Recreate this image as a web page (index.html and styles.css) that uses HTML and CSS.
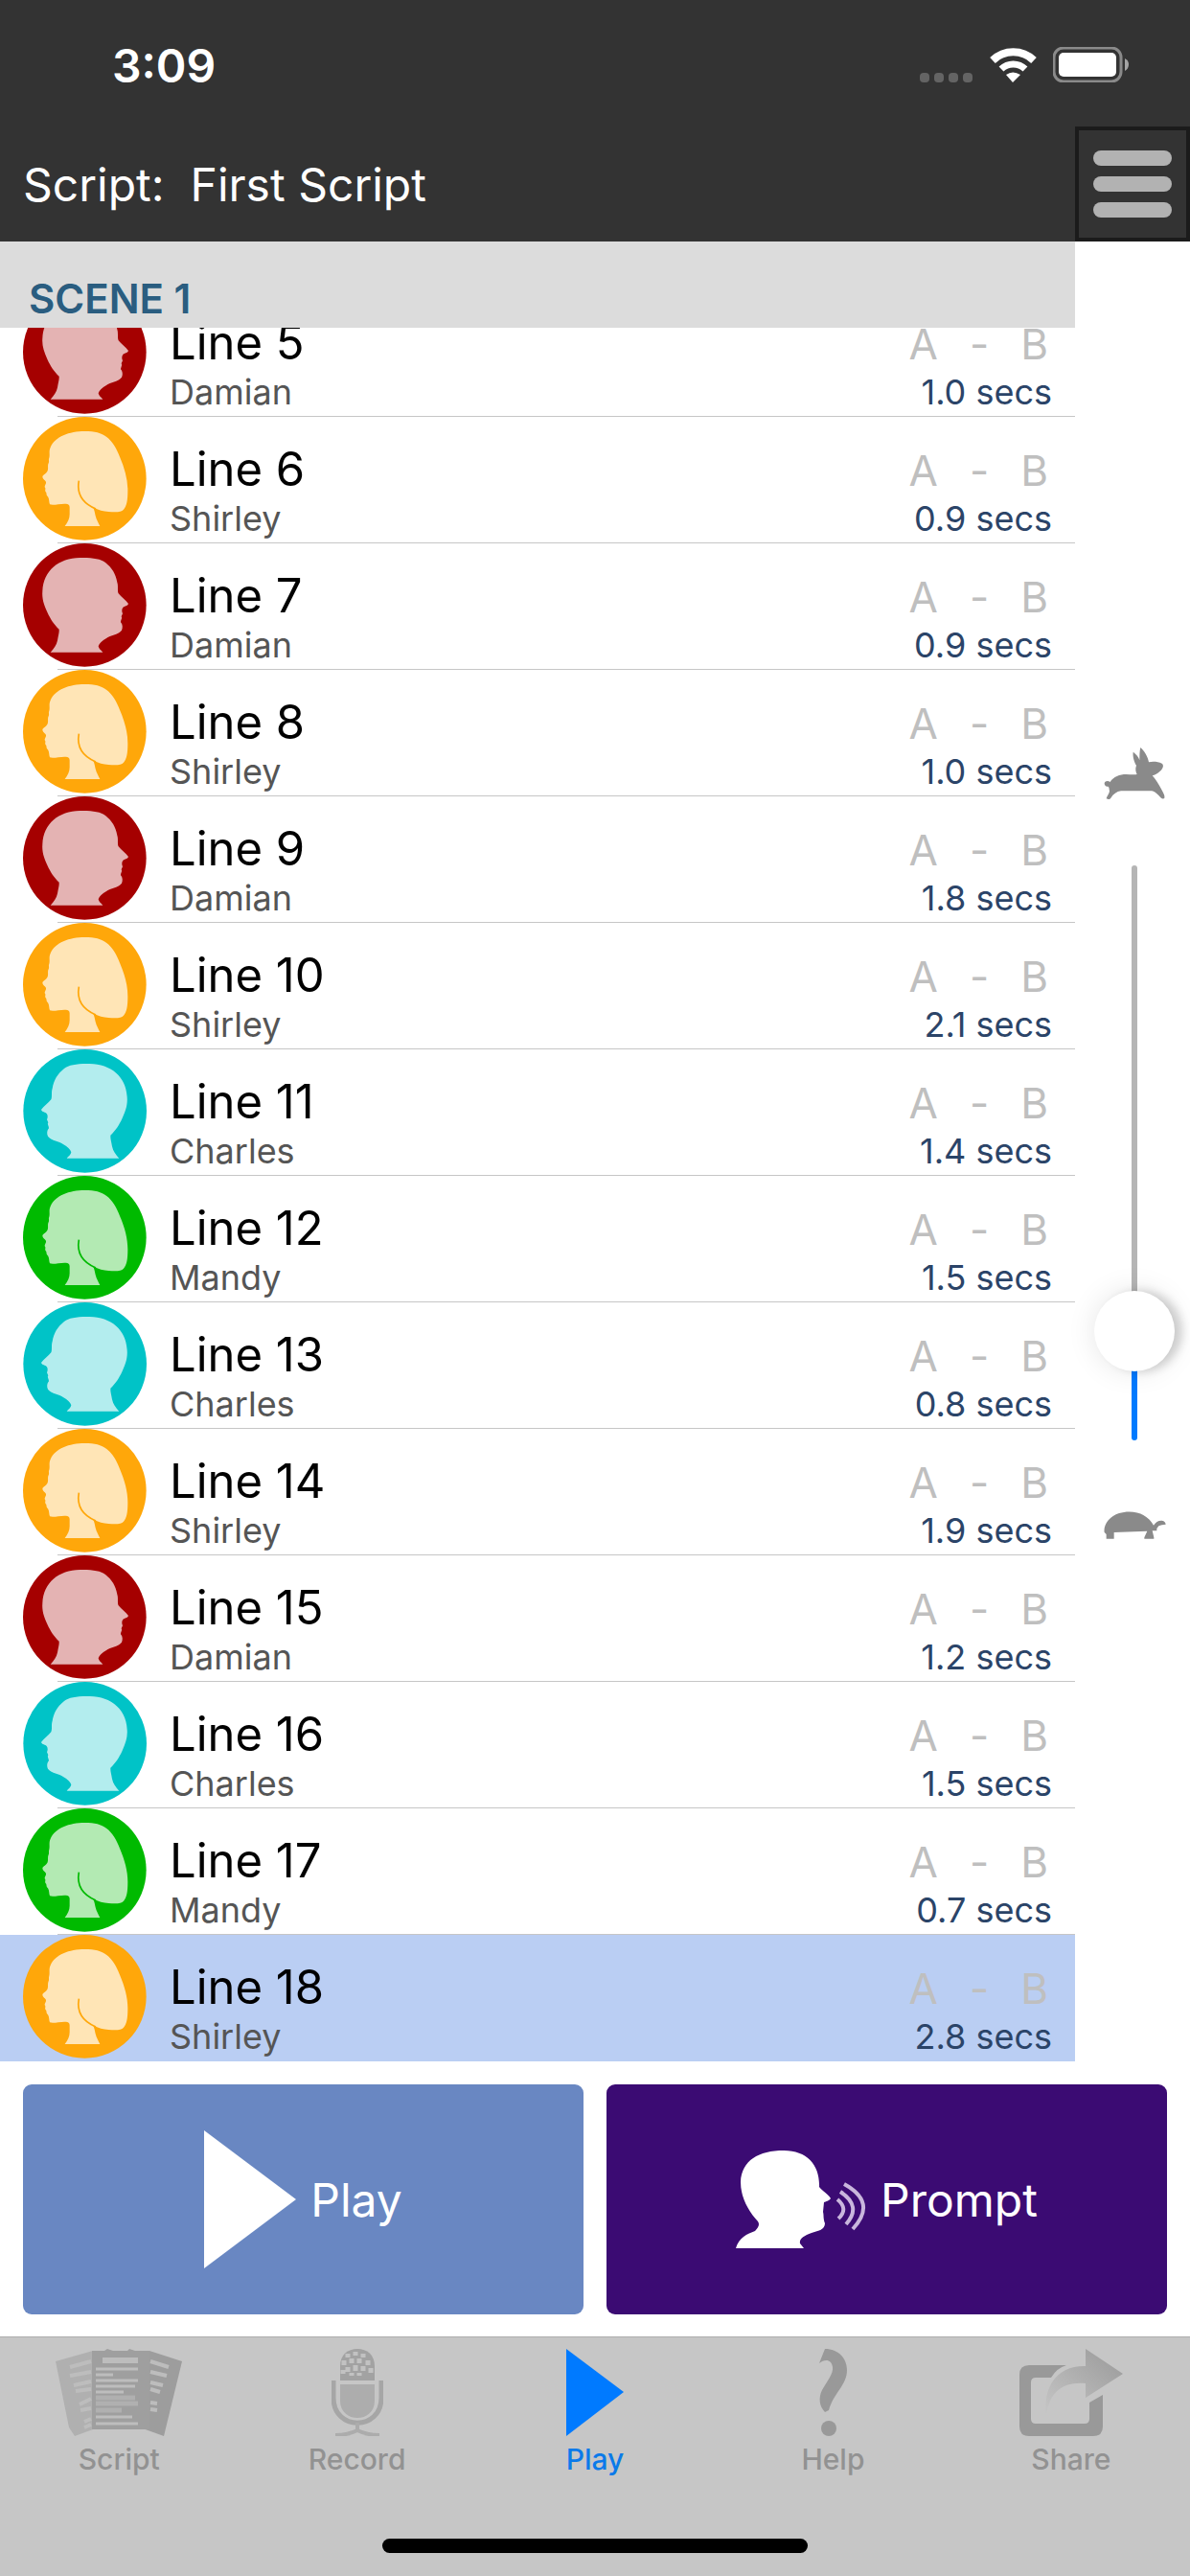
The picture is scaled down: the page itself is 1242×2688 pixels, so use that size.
FILE: index.html
```html
<!DOCTYPE html>
<html lang="en">

<head>
    <meta charset="UTF-8">
    <meta name="viewport" content="width=device-width, initial-scale=1.0">
    <title>First Script</title>
    <link rel="stylesheet" href="styles.css">
</head>

<body>

    <!-- Shared avatar shapes -->
    <svg class="sprite" aria-hidden="true">
        <symbol id="woman" viewBox="0 0 387 387">
            <circle cx="193" cy="193" r="193" fill="currentColor" />
            <path class="face" d="M86 95C100 62 145 45 193 45C225 45 245 50 262 63C280 77 293 99 303 125C318 160 328 195 328 230C328 262 325 278 315 290C308 299 290 298 268 297C252 296 236 291 220 284C224 294 225 300 227 310C230 322 236 332 241 342H131C140 330 146 318 146 305V283C146 275 142 273 134 272C115 271 96 278 84 274C81 267 83 258 78 250C71 244 76 240 71 235C67 229 73 225 68 220C67 215 73 210 72 205C72 199 61 196 61 187C63 181 73 178 77 169C80 160 76 153 80 145C83 140 79 135 82 128C85 118 80 108 86 95Z" />
            <path d="M175 200C167 245 190 272 228 288" fill="none" stroke="currentColor" stroke-width="5" />
        </symbol>
        <symbol id="man" viewBox="0 0 387 387">
            <circle cx="193" cy="193" r="193" fill="currentColor" />
            <path class="face" d="M178 45C215 44 243 48 258 60C279 77 290 95 295 122C299 133 295 148 299 157C306 167 323 178 330 189C328 197 316 196 313 201C309 206 309 213 312 220L308 229C312 234 306 240 306 247C312 253 313 264 309 272C296 287 275 286 260 298C248 305 239 313 236 322C237 330 245 335 250 341H86C97 330 105 318 108 304C110 290 114 279 113 269C96 252 86 237 76 215C65 191 59 172 61 149C64 85 112 46 178 45Z" />
        </symbol>
    </svg>

    <!-- Header -->
    <header>
        <div class="status-bar">
            <span class="clock">3:09</span>
            <div class="status-icons">
                <svg width="56" height="10" viewBox="0 0 56 10" fill="#646464">
                    <rect width="10" height="10" rx="4" />
                    <rect x="15" width="10" height="10" rx="4" />
                    <rect x="30" width="10" height="10" rx="4" />
                    <rect x="45" width="10" height="10" rx="4" />
                </svg>
                <svg width="49" height="36" viewBox="0 0 49 36" fill="none" stroke="#fff">
                    <path d="M3 13A31 31 0 0 1 46 13" stroke-width="8" />
                    <path d="M12 22A18 18 0 0 1 37 22" stroke-width="7" />
                    <path d="M24 36L17 28Q24 23 32 28Z" fill="#fff" stroke="none" />
                </svg>
                <svg width="79" height="37" viewBox="0 0 79 37">
                    <rect x="1" y="1" width="70" height="35" rx="10" fill="none" stroke="#8a8a8a" stroke-width="3" />
                    <rect x="6" y="6" width="60" height="25" rx="5" fill="#fff" />
                    <path d="M75 12Q79 14 79 18Q79 23 75 25Z" fill="#a5a5a5" />
                </svg>
            </div>
        </div>
        <div class="title-bar">
            <h1>Script:&nbsp; First Script</h1>
            <button class="menu-button" aria-label="Menu">
                <span class="menu-bar"></span>
                <span class="menu-bar"></span>
                <span class="menu-bar"></span>
            </button>
        </div>
    </header>

    <!-- Script lines and speed slider -->
    <main>
        <section class="scene">
            <h2>SCENE 1</h2>
            <ul class="lines">
                <li class="line">
                    <svg class="avatar damian"><use href="#man" /></svg>
                    <span class="line-title">Line 5</span>
                    <span class="range"><span>A</span><span>-</span><span>B</span></span>
                    <span class="name">Damian</span>
                    <span class="secs">1.0 secs</span>
                </li>
                <li class="line">
                    <svg class="avatar shirley"><use href="#woman" /></svg>
                    <span class="line-title">Line 6</span>
                    <span class="range"><span>A</span><span>-</span><span>B</span></span>
                    <span class="name">Shirley</span>
                    <span class="secs">0.9 secs</span>
                </li>
                <li class="line">
                    <svg class="avatar damian"><use href="#man" /></svg>
                    <span class="line-title">Line 7</span>
                    <span class="range"><span>A</span><span>-</span><span>B</span></span>
                    <span class="name">Damian</span>
                    <span class="secs">0.9 secs</span>
                </li>
                <li class="line">
                    <svg class="avatar shirley"><use href="#woman" /></svg>
                    <span class="line-title">Line 8</span>
                    <span class="range"><span>A</span><span>-</span><span>B</span></span>
                    <span class="name">Shirley</span>
                    <span class="secs">1.0 secs</span>
                </li>
                <li class="line">
                    <svg class="avatar damian"><use href="#man" /></svg>
                    <span class="line-title">Line 9</span>
                    <span class="range"><span>A</span><span>-</span><span>B</span></span>
                    <span class="name">Damian</span>
                    <span class="secs">1.8 secs</span>
                </li>
                <li class="line">
                    <svg class="avatar shirley"><use href="#woman" /></svg>
                    <span class="line-title">Line 10</span>
                    <span class="range"><span>A</span><span>-</span><span>B</span></span>
                    <span class="name">Shirley</span>
                    <span class="secs">2.1 secs</span>
                </li>
                <li class="line">
                    <svg class="avatar charles"><use href="#man" /></svg>
                    <span class="line-title">Line 11</span>
                    <span class="range"><span>A</span><span>-</span><span>B</span></span>
                    <span class="name">Charles</span>
                    <span class="secs">1.4 secs</span>
                </li>
                <li class="line">
                    <svg class="avatar mandy"><use href="#woman" /></svg>
                    <span class="line-title">Line 12</span>
                    <span class="range"><span>A</span><span>-</span><span>B</span></span>
                    <span class="name">Mandy</span>
                    <span class="secs">1.5 secs</span>
                </li>
                <li class="line">
                    <svg class="avatar charles"><use href="#man" /></svg>
                    <span class="line-title">Line 13</span>
                    <span class="range"><span>A</span><span>-</span><span>B</span></span>
                    <span class="name">Charles</span>
                    <span class="secs">0.8 secs</span>
                </li>
                <li class="line">
                    <svg class="avatar shirley"><use href="#woman" /></svg>
                    <span class="line-title">Line 14</span>
                    <span class="range"><span>A</span><span>-</span><span>B</span></span>
                    <span class="name">Shirley</span>
                    <span class="secs">1.9 secs</span>
                </li>
                <li class="line">
                    <svg class="avatar damian"><use href="#man" /></svg>
                    <span class="line-title">Line 15</span>
                    <span class="range"><span>A</span><span>-</span><span>B</span></span>
                    <span class="name">Damian</span>
                    <span class="secs">1.2 secs</span>
                </li>
                <li class="line">
                    <svg class="avatar charles"><use href="#man" /></svg>
                    <span class="line-title">Line 16</span>
                    <span class="range"><span>A</span><span>-</span><span>B</span></span>
                    <span class="name">Charles</span>
                    <span class="secs">1.5 secs</span>
                </li>
                <li class="line">
                    <svg class="avatar mandy"><use href="#woman" /></svg>
                    <span class="line-title">Line 17</span>
                    <span class="range"><span>A</span><span>-</span><span>B</span></span>
                    <span class="name">Mandy</span>
                    <span class="secs">0.7 secs</span>
                </li>
                <li class="line selected">
                    <svg class="avatar shirley"><use href="#woman" /></svg>
                    <span class="line-title">Line 18</span>
                    <span class="range"><span>A</span><span>-</span><span>B</span></span>
                    <span class="name">Shirley</span>
                    <span class="secs">2.8 secs</span>
                </li>
            </ul>
        </section>

        <aside class="speed">
            <!-- Rabbit -->
            <svg width="64" height="56" viewBox="0 0 192 168" fill="#8a8a8a">
                <path d="M2 112C4 104 14 104 20 108C30 92 50 84 70 84C82 84 96 86 104 84C100 76 98 66 102 56C96 46 90 30 92 14C100 20 110 30 112 40C112 24 112 10 115 0C128 12 138 28 141 46C152 43 170 44 182 50C190 56 184 68 176 74C168 82 160 86 152 88C162 98 172 116 180 130C186 142 192 150 190 158C186 164 178 158 172 150C164 144 158 136 150 136H54C40 138 30 146 22 158C18 164 10 162 8 160C10 152 18 144 18 136C16 130 18 126 14 122C8 124 2 120 2 112Z" />
            </svg>
            <input class="speed-slider" type="range" min="0" max="100" value="14" aria-label="Speed">
            <!-- Turtle -->
            <svg width="65" height="30" viewBox="0 0 195 90" fill="#8a8a8a">
                <path d="M2 66C-2 42 18 16 48 6C72 -2 106 0 124 12C138 20 150 32 156 44C162 34 172 28 182 29C190 30 194 36 194 41C186 42 178 42 172 46L166 54V61H152L157 82V86H127V82L136 62L32 66V86H8V72Z" />
            </svg>
        </aside>
    </main>

    <!-- Play and Prompt -->
    <div class="actions">
        <button class="action play">
            <svg width="96" height="144" viewBox="0 0 96 144" fill="#fff">
                <path d="M0 0L96 72L0 144Z" />
            </svg>
            Play
        </button>
        <button class="action prompt">
            <svg width="136" height="102" viewBox="0 0 136 102" fill="#fff">
                <path d="M0 102C3 91 12 87 20 84C24 80 25 77 23 74C14 64 5 50 5 33C6 10 24 0 50 0C75 0 88 16 87 38C90 42 97 46 99 50C97 53 94 53 92 54L91 64C92 68 91 71 93 76C93 83 85 84 79 86C71 89 66 92 67 97L71 102Z" />
                <path d="M106 51Q118 61 107 71M109 43Q132 58 115 77M113 35Q148 54 122 82" fill="none" stroke="#c9b6dd" stroke-width="4" />
            </svg>
            Prompt
        </button>
    </div>

    <!-- Tab bar -->
    <nav class="tab-bar">
        <div class="tabs">
            <a class="tab" href="#script">
                <svg width="132" height="91" viewBox="0 0 132 91">
                    <path d="M0 13L39 2V84L20 91L14 82Z" fill="#b0b0b0" />
                    <path d="M98 2L132 13L113 91L88 82Z" fill="#9d9d9d" />
                    <path d="M38 2H51L54 0L60 2H75L77 0L83 2H98V84H38Z" fill="#9f9f9f" />
                    <path d="M49 11H86M42 21H86M42 27H60M42 33H86M42 39H83M42 45H71M42 71H80M42 78H86" stroke="#bdbdbd" stroke-width="3" />
                    <path d="M49 12H86" stroke="#bdbdbd" stroke-width="6" />
                    <path d="M42 51H83M42 57H86M42 64H69" stroke="#b0b0b0" stroke-width="5" />
                    <path d="M15 19L37 13M15 28L37 24M19 38L37 34M21 44L37 42M25 58L37 52M26 64L37 62M30 76L37 73M30 82L37 79M99 13L118 19M99 24L116 28M99 35L112 38M99 42L109 45M99 56L106 57M99 63L106 64" stroke="#bdbdbd" stroke-width="4" />
                </svg>
                Script
            </a>
            <a class="tab" href="#record">
                <svg width="54" height="91" viewBox="0 0 54 91">
                    <path d="M9 33V18C9 6 17 0 27 0C37 0 45 6 45 18V33Z" fill="#a2a2a2" />
                    <path d="M17 5V9M25 3V7M33 5V9M13 12V17M21 10V15M29 10V15M38 12V17M17 19V24M25 17V23M33 18V23M41 20V25M12 22V26M21 25V28M29 25V28" stroke="#c2c2c2" stroke-width="5" />
                    <path d="M9 37H45V54C45 78 9 78 9 54Z" fill="#adadad" />
                    <path d="M2 33V51C2 86 52 86 52 51V33" fill="none" stroke="#a6a6a6" stroke-width="5" />
                    <path d="M27 77V86M4 90Q17 90 27 85Q37 90 50 90" fill="none" stroke="#acacac" stroke-width="4" />
                </svg>
                Record
            </a>
            <a class="tab active" href="#play">
                <svg width="60" height="91" viewBox="0 0 60 91" fill="#007aff">
                    <path d="M0 0L60 45L0 91Z" />
                </svg>
                Play
            </a>
            <a class="tab" href="#help">
                <svg width="32" height="91" viewBox="0 0 32 91" fill="#999">
                    <path d="M8 0C22 0 31 10 31 22C31 38 17 46 12 64L8 66C2 60 1 51 5 43C10 34 17 26 16 19C15 11 8 10 2 15Z" />
                    <ellipse cx="12" cy="83" rx="8" ry="8" />
                </svg>
                Help
            </a>
            <a class="tab" href="#share">
                <svg width="108" height="91" viewBox="0 0 108 91">
                    <defs>
                        <linearGradient id="fade" x1="1" y1="0" x2="0" y2="1">
                            <stop offset="0" stop-color="#999" />
                            <stop offset="1" stop-color="#c6c6c6" />
                        </linearGradient>
                    </defs>
                    <path d="M49 17Q39 20 33 30H17Q12 30 12 35V73Q12 78 17 78H68Q73 78 73 73V56L87 48V81Q87 91 77 91H10Q0 91 0 81V27Q0 17 10 17Z" fill="#999" />
                    <path d="M69 0L108 26L69 51V36C45 34 31 45 28 70C24 40 39 17 69 18Z" fill="url(#fade)" />
                </svg>
                Share
            </a>
        </div>
        <div class="home-indicator"></div>
    </nav>

</body>

</html>
```
FILE: styles.css
```css
/* Global styles */
* {
    margin: 0;
    padding: 0;
    box-sizing: border-box;
}

body {
    font-family: Inter, 'Liberation Sans', sans-serif;
    background-color: #fff;
    display: flex;
    flex-direction: column;
    height: 100vh;
}

button {
    border: none;
    font-family: inherit;
    cursor: pointer;
}

.sprite {
    display: none;
}

/* Header */
header {
    background-color: #333;
    color: #fff;
}

.status-bar {
    display: flex;
    justify-content: space-between;
    height: 132px;
    padding: 39px 64px 0 117px;
}

.clock {
    font-size: 48px;
    line-height: 60px;
    font-weight: 600;
}

.status-icons {
    display: flex;
    align-items: flex-end;
    gap: 17px;
    height: 47px;
}

.title-bar {
    display: flex;
    justify-content: space-between;
    align-items: center;
    height: 120px;
    padding-left: 24px;
}

h1 {
    padding-top: 2px;
    font-size: 48px;
    line-height: 60px;
    font-weight: 400;
}

.menu-button {
    display: flex;
    flex-direction: column;
    justify-content: center;
    align-items: center;
    gap: 11px;
    width: 120px;
    height: 120px;
    background-color: #333;
    border: 4px solid #1b1b1b;
}

.menu-bar {
    width: 82px;
    height: 16px;
    border-radius: 8px;
    background-color: #b2b2b2;
}

/* Main area */
main {
    display: flex;
    flex: 1;
    min-height: 0;
}

.scene {
    display: flex;
    flex-direction: column;
    flex: 1;
}

h2 {
    height: 90px;
    padding: 35px 30px 0;
    background-color: #dcdcdc;
    color: #2a5d80;
    font-size: 42px;
    line-height: 50px;
    font-weight: 600;
}

/* Lines, scrolled to the last one */
.lines {
    display: flex;
    flex-direction: column;
    justify-content: flex-end;
    flex: 1;
    min-height: 0;
    overflow: hidden;
    list-style: none;
}

.line {
    display: grid;
    grid-template-columns: 129px 1fr auto;
    grid-template-rows: 62px 40px;
    align-items: baseline;
    column-gap: 24px;
    flex-shrink: 0;
    height: 132px;
    padding: 24px 24px 0;
    background: linear-gradient(#c6c6c6, #c6c6c6) no-repeat right bottom / calc(100% - 60px) 1px;
}

.selected {
    background: #bacef3;
}

.avatar {
    grid-row: 1 / 3;
    align-self: start;
    width: 129px;
    height: 129px;
    margin-top: -24px;
}

.face {
    fill: #fff;
    fill-opacity: 0.7;
}

.damian {
    color: #a50000;
}

.shirley {
    color: #ffa70a;
}

.charles {
    color: #00c3c7;
    transform: scaleX(-1);
}

.mandy {
    color: #00ba00;
}

.line-title {
    font-size: 49px;
    line-height: 62px;
}

.range {
    display: flex;
    justify-content: flex-end;
    gap: 33px;
    padding-right: 4px;
    color: #bfbfbf;
    font-size: 44px;
    line-height: 62px;
}

.name,
.secs {
    font-size: 36px;
    line-height: 40px;
}

.name {
    color: #555;
}

.secs {
    color: #2b4468;
    text-align: right;
}

/* Speed slider */
.speed {
    display: flex;
    flex-direction: column;
    align-items: center;
    width: 120px;
    padding: 528px 0 0 4px;
}

.speed-slider {
    appearance: none;
    writing-mode: vertical-lr;
    direction: rtl;
    width: 84px;
    height: 600px;
    margin: 67px 0 74px;
    background: none;
}

.speed-slider::-webkit-slider-runnable-track {
    width: 6px;
    height: 600px;
    border-radius: 3px;
    background: linear-gradient(to top, #007aff 19%, #b5b5b5 19%);
}

.speed-slider::-webkit-slider-thumb {
    appearance: none;
    width: 84px;
    height: 84px;
    margin-left: -39px;
    border-radius: 50%;
    background-color: #fff;
    box-shadow: 8px 0 10px rgba(0, 0, 0, 0.16), 0 0 30px rgba(0, 0, 0, 0.1);
}

/* Action buttons */
.actions {
    display: flex;
    gap: 24px;
    padding: 24px 24px 23px;
}

.action {
    display: flex;
    justify-content: center;
    align-items: center;
    gap: 15px;
    flex: 1;
    height: 240px;
    border-radius: 9px;
    color: #fff;
    font-size: 48px;
}

.play {
    background-color: #6987c2;
}

.prompt {
    background-color: #3b0b73;
}

/* Tab bar */
.tab-bar {
    display: flex;
    flex-direction: column;
    justify-content: space-between;
    align-items: center;
    height: 250px;
    padding: 12px 0 24px;
    background-color: #c6c6c6;
    border-top: 1px solid #adadad;
}

.tabs {
    display: flex;
    width: 100%;
}

.tab {
    display: flex;
    flex-direction: column;
    align-items: center;
    gap: 6px;
    flex: 1;
    color: #929292;
    font-size: 30px;
    line-height: 36px;
    font-weight: 500;
    text-decoration: none;
}

.active {
    color: #0a7aea;
}

.home-indicator {
    width: 444px;
    height: 15px;
    border-radius: 8px;
    background-color: #000;
}
```
